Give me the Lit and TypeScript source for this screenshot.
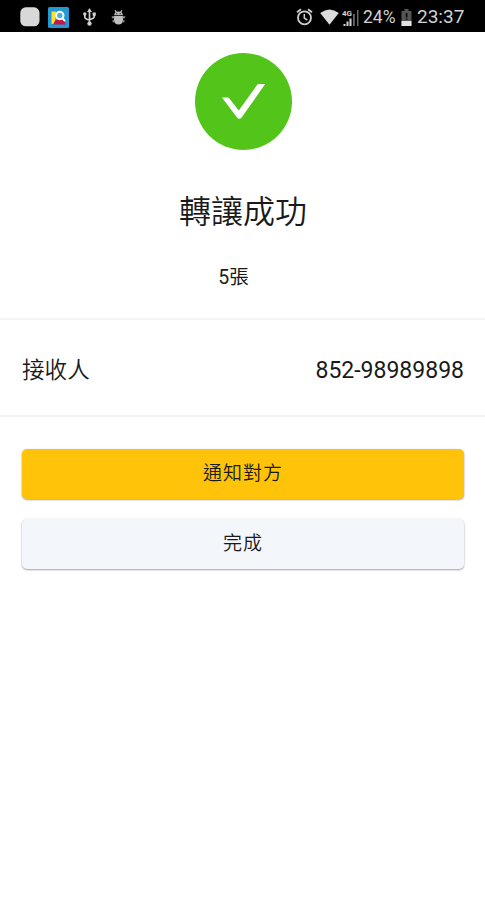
import { LitElement, html, css } from "lit";
import { customElement } from "lit/decorators.js";

@customElement("status-bar")
class StatusBar extends LitElement {
  static styles = css`
    :host {
      display: flex;
      align-items: center;
      box-sizing: border-box;
      height: 32px;
      padding: 2px 20px 0 20px;
      background: #000;
      color: #d2d2d2;
      font-family: Roboto, sans-serif;
      white-space: nowrap;
    }
    svg { display: block; flex: none; }
    .app { margin-left: 8px; }
    .usb { margin-left: 13px; }
    .bug { margin-left: 14px; }
    .grow { flex: 1; }
    .wifi { margin-left: 7px; }
    .signal { margin-left: 3px; }
    .net { font: 700 8px Roboto, sans-serif; fill: #d0d0d0; }
    .percent { width: 33px; margin-left: 4px; font-size: 17.5px; line-height: 28px; }
    .battery { margin-left: 5px; }
    .time { width: 48px; margin-left: 5px; font-size: 19px; line-height: 28px; }
  `;

  render() {
    return html`
      <svg width="20" height="20" viewBox="0 0 20 20"><rect x=".3" y=".3" width="19.2" height="19" rx="5.5" fill="#d8d8d8" /></svg>
      <svg class="app" width="21" height="21" viewBox="0 0 21 21">
        <rect width="21" height="21" rx="1.5" fill="#2499d1" />
        <path d="M3.5 4.5H8L7 17H3.5z" fill="#ffe02e" />
        <path d="M5 17.5l2.500-4.500h8l2.500 4.500z" fill="#c01748" />
        <circle cx="11.8" cy="8.5" r="3.700" fill="#4aafe0" stroke="#fff" stroke-width="2" />
        <path d="M14.5 11.5l2.5 2.5" stroke="#fff" stroke-width="1.800" />
      </svg>
      <svg class="usb" width="15" height="18" viewBox="0 0 15 18" fill="none" stroke="#d0d0d0" stroke-width="1.7">
        <path d="M7.5 3v12M2.8 6v3q0 2 4.7 3M12.2 6v2.5q0 2-4.7 3" />
        <path d="M7.5 0l2.5 4H5z" fill="#d0d0d0" stroke="none" />
        <circle cx="7.5" cy="15.6" r="2.2" fill="#d0d0d0" stroke="none" />
        <circle cx="2.8" cy="6" r="1.7" fill="#d0d0d0" stroke="none" />
        <rect x="10.6" y="4.5" width="3.2" height="3.2" fill="#d0d0d0" stroke="none" />
      </svg>
      <svg class="bug" width="15" height="15" viewBox="0 0 15 15" fill="#c0c0c0">
        <path d="M3.2 5Q3.5 1.6 7.5 1.6T11.800 5zM3 5.800h9v4.700q-.5 4-4.500 4T3 10.500z" />
        <path d="M4 .3l1.500 2M11 .3L9.500 2.300" fill="none" stroke="#c0c0c0" stroke-width="1.200" />
        <path d="M.8 6.200h2.700v2H.8zM11.500 6.200h2.700v2h-2.700zM1.500 10.300h2v2h-2zM11.500 10.300h2v2h-2z" fill="#909090" />
        <path d="M5.200 3.200h1.200v1.100H5.200zM8.600 3.200h1.200v1.100H8.600z" fill="#111" />
      </svg>
      <span class="grow"></span>
      <svg width="17" height="18" viewBox="0 0 17 18" fill="none" stroke="#cfcfcf">
        <circle cx="8.5" cy="9.8" r="6.5" stroke-width="1.8" />
        <path d="M1 4.2l4-3M16 4.2l-4-3" stroke-width="1.8" />
        <path d="M8.3 6v4.2l3 1.8" stroke-width="1.5" />
      </svg>
      <svg class="wifi" width="19" height="16" viewBox="0 0 19 16"><path d="M.2 4Q9.5-3 18.8 4L9.5 15.8z" fill="#dcdcdc" /></svg>
      <svg class="signal" width="17" height="19" viewBox="0 0 17 19">
        <path d="M1.5 16h2v2h-2zM4.500 13.500h2V18h-2zM7.500 10.500h2V18h-2z" fill="#d5d5d5" />
        <path d="M11 6h1.800v12H11zM15 2h1.500v16H15z" fill="#666" />
        <text class="net" x="0" y="7.5">4G</text>
      </svg>
      <span class="percent">24%</span>
      <svg class="battery" width="11" height="17" viewBox="0 0 11 17">
        <path d="M3.5 0h4v2h3v15H.5V2h3z" fill="#555" />
        <path d="M.5 12h10v5H.5z" fill="#e2e2e2" />
        <path d="M4.8 4h1.6v4.500H4.800zM4.800 9.400h1.600v1.400H4.800z" fill="#080808" />
      </svg>
      <span class="time">23:37</span>
    `;
  }
}

@customElement("app-root")
class AppRoot extends LitElement {
  static styles = css`
    :host {
      display: block;
      min-height: 900px;
      background: #fff;
      color: #1a1a1a;
      font-family: Roboto, "Noto Sans CJK TC", sans-serif;
    }
    .result {
      display: flex;
      flex-direction: column;
      align-items: center;
      box-sizing: border-box;
      height: 288px;
      padding: 21px 0 0 1px;
      border-bottom: 2px solid #f5f5f5;
    }
    .result svg { display: block; }
    .title {
      margin: 38px 0 0;
      font-size: 32px;
      font-weight: 350;
      line-height: 48px;
    }
    .count {
      margin: 27px 19px 0 0;
      font-size: 19.5px;
      line-height: 30px;
    }
    .row {
      display: flex;
      align-items: center;
      justify-content: space-between;
      box-sizing: border-box;
      height: 97px;
      padding: 2px 21px 0 22px;
      border-bottom: 2px solid #f3f3f3;
      font-size: 22.6px;
      font-weight: 350;
    }
    .number { padding-top: 4px; font-size: 23px; font-weight: 400; }
    .actions {
      display: flex;
      flex-direction: column;
      gap: 20px;
      padding: 32px 21px 0 22px;
    }
    button {
      height: 50px;
      padding: 0 0 5px;
      border: 0;
      border-radius: 5px;
      background: #f3f6fa;
      color: #1a1a1a;
      font: 350 19px Roboto, "Noto Sans CJK TC", sans-serif;
      letter-spacing: 1px;
      box-shadow: 0 1px 2px rgba(0, 0, 0, 0.35), 0 0 3px rgba(0, 0, 0, 0.06);
    }
    .primary { background: #ffc409; }
  `;

  render() {
    return html`
      <status-bar></status-bar>
      <section class="result">
        <svg width="97" height="97" viewBox="0 0 97 97">
          <circle cx="48.5" cy="48.5" r="48.5" fill="#52c41a" />
          <path d="M27 44.5h5.200q1.400 0 2.200 1.100l9.400 12L61.800 32.300q.8-1.200 2.200-1.200h6.200L46.800 64.300q-2.500 3-5 0z" fill="#fff" />
        </svg>
        <h1 class="title">轉讓成功</h1>
        <div class="count">5張</div>
      </section>
      <section class="row">
        <span>接收人</span>
        <span class="number">852-98989898</span>
      </section>
      <section class="actions">
        <button class="primary">通知對方</button>
        <button>完成</button>
      </section>
    `;
  }
}
